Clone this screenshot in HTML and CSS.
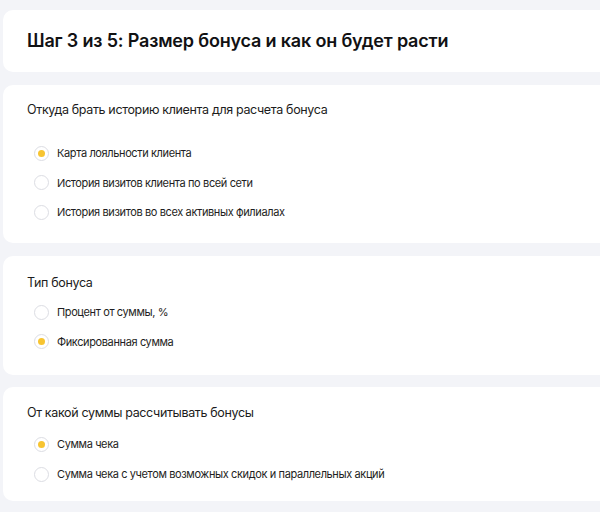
FILE: index.html
```html
<!DOCTYPE html>
<html lang="ru">
<head>
<meta charset="utf-8">
<link rel="stylesheet" href="styles.css">
</head>
<body>
<div class="page">
  <section class="card card-title">
    <h1 class="title">Шаг 3 из 5: Размер бонуса и как он будет расти</h1>
  </section>

  <section class="card card-q1">
    <div class="question">Откуда брать историю клиента для расчета бонуса</div>
    <ul class="options options-wide">
      <li class="option"><span class="radio checked"></span><span class="label">Карта лояльности клиента</span></li>
      <li class="option"><span class="radio"></span><span class="label">История визитов клиента по всей сети</span></li>
      <li class="option"><span class="radio"></span><span class="label">История визитов во всех активных филиалах</span></li>
    </ul>
  </section>

  <section class="card card-q2">
    <div class="question">Тип бонуса</div>
    <ul class="options">
      <li class="option"><span class="radio"></span><span class="label">Процент от суммы, %</span></li>
      <li class="option"><span class="radio checked"></span><span class="label">Фиксированная сумма</span></li>
    </ul>
  </section>

  <section class="card card-q3">
    <div class="question">От какой суммы рассчитывать бонусы</div>
    <ul class="options options-q3">
      <li class="option"><span class="radio checked"></span><span class="label">Сумма чека</span></li>
      <li class="option"><span class="radio"></span><span class="label">Сумма чека с учетом возможных скидок и параллельных акций</span></li>
    </ul>
  </section>
</div>
</body>
</html>
```

FILE: styles.css
```css
html, body {
  margin: 0;
  padding: 0;
  overflow: hidden;
}

body {
  background: #f3f4f8;
  font-family: Inter, "Noto Sans", sans-serif;
  color: #1f1f22;
}

.page {
  display: flex;
  flex-direction: column;
  gap: 12.5px;
  padding: 10px 0 0 3px;
  width: 620px;
}

.card {
  background: #ffffff;
  border-radius: 10px;
  padding: 16px 24px 16px 24px;
}

.card-title {
  height: 62px;
  box-sizing: border-box;
  display: flex;
  align-items: center;
  padding: 0 24px;
}

.title {
  margin: 0;
  font-size: 18px;
  font-weight: 600;
  line-height: 24px;
  color: #111113;
  letter-spacing: -0.18px;
}

.question {
  font-size: 12.5px;
  line-height: 22px;
  letter-spacing: -0.35px;
  color: #1c1c20;
}

.card-q1 .question {
  margin-top: -2px;
}

.options {
  list-style: none;
  margin: 4px 0 0 0;
  padding: 0;
}

.options-wide {
  margin-top: 18px;
}

.card-q2 {
  padding-bottom: 18px;
}

.card-q3 {
  padding-top: 15px;
  padding-bottom: 12px;
}

.options-q3 {
  margin-top: 5px;
}

.options-q3 .option {
  height: 30px;
}

.option {
  display: flex;
  align-items: center;
  height: 29.5px;
  gap: 8px;
  padding-left: 7px;
}

.radio {
  width: 15px;
  height: 15px;
  box-sizing: border-box;
  border: 1px solid #dcdde3;
  border-radius: 50%;
  display: flex;
  align-items: center;
  justify-content: center;
  flex: none;
}

.radio.checked::after {
  content: "";
  width: 7px;
  height: 7px;
  border-radius: 50%;
  background: #f7c431;
}

.label {
  font-size: 11px;
  line-height: 18px;
  letter-spacing: -0.38px;
  color: #1e1e22;
}
```
